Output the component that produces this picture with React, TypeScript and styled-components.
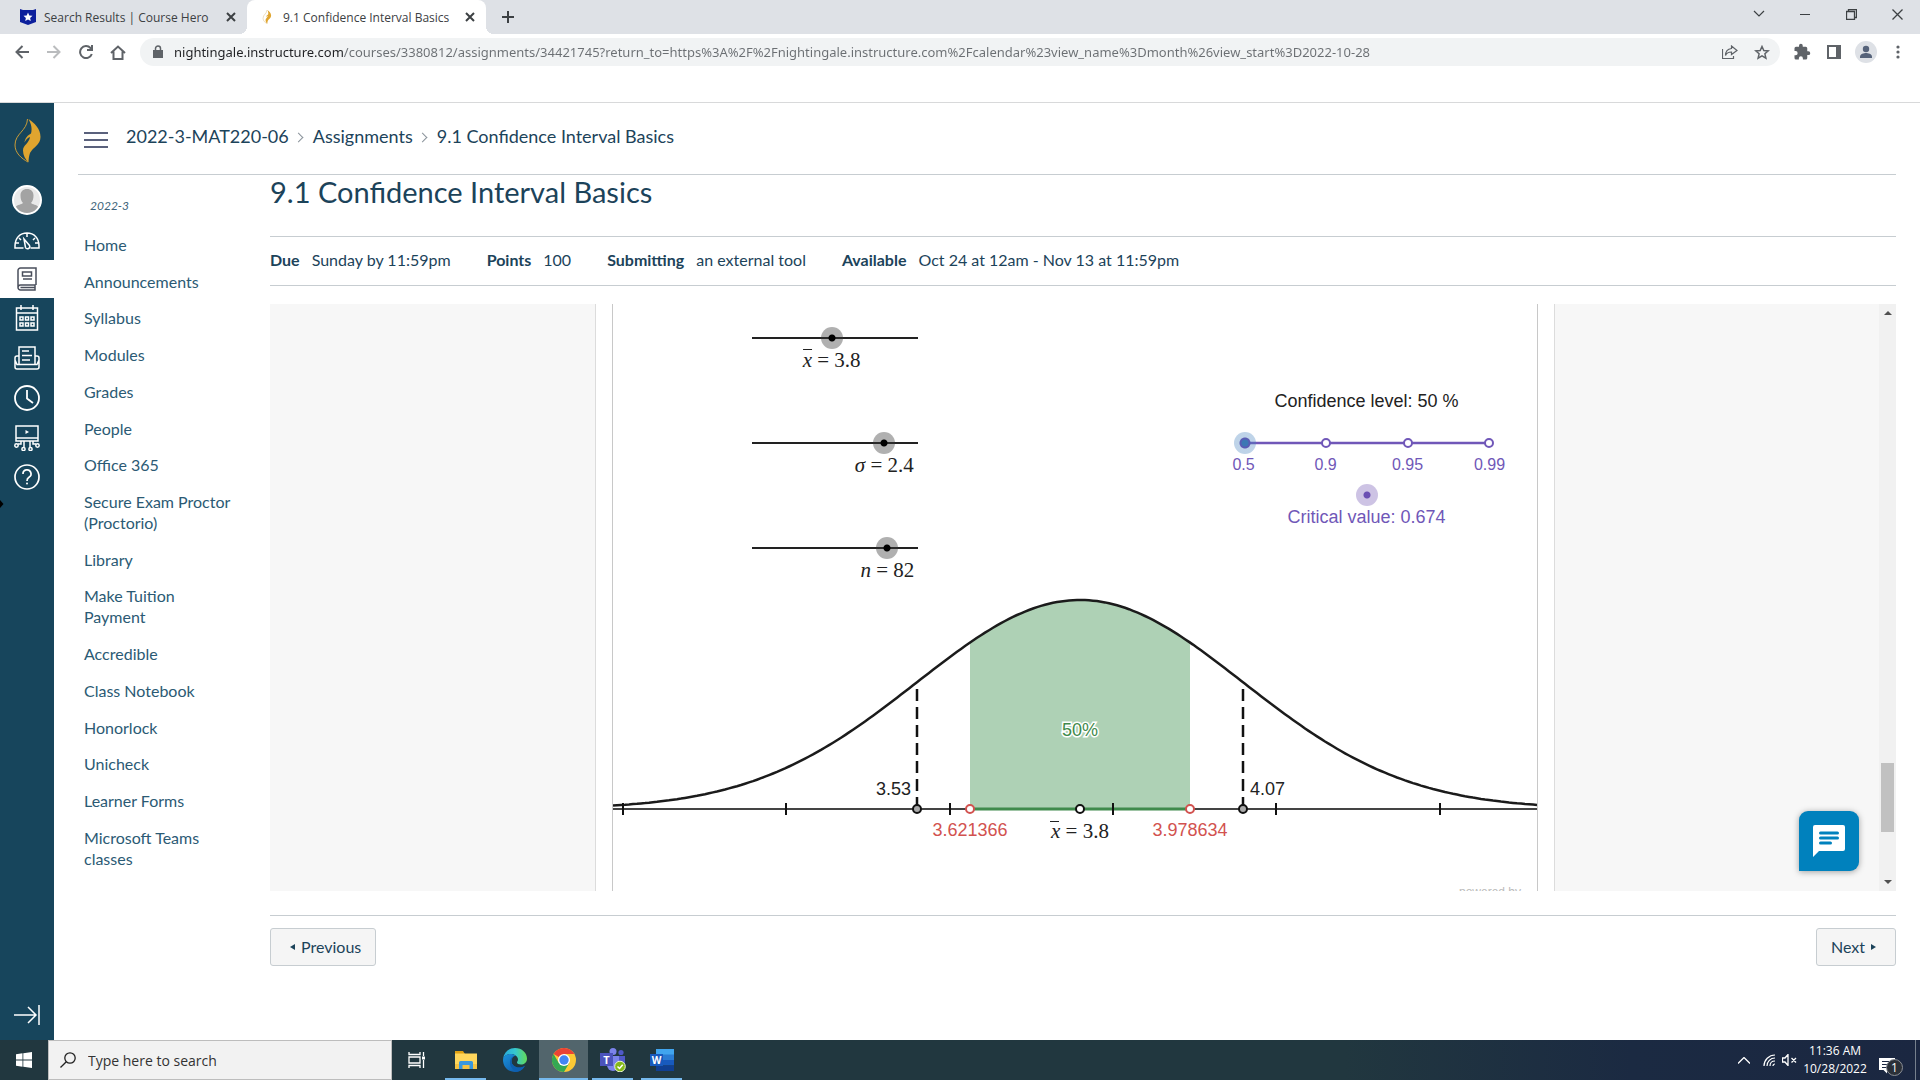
import React, { useState } from 'react';
import styled, { createGlobalStyle, css } from 'styled-components';

const UI_FONT = '"Open Sans", "Noto Sans", sans-serif';
const LATO = 'Lato, "Open Sans", sans-serif';
const MATH_FONT = '"Liberation Serif", serif';
const GRAPH_FONT = '"Liberation Sans", Arial, sans-serif';

const NAVY = '#17455c';
const INK = '#1c435a';
const RULE = '#c7cdd1';
const PURPLE = '#7057b8';

const GlobalStyle = createGlobalStyle`
  *, *::before, *::after { box-sizing: border-box; }
  body { margin: 0; background: #fff; font-family: ${LATO}; color: ${INK}; }
  button { font: inherit; color: inherit; background: none; border: 0; padding: 0; cursor: pointer; }
  a { color: inherit; text-decoration: none; }
  h1, ul, ol, dl, dd, p { margin: 0; padding: 0; }
  ul, ol { list-style: none; }
  svg { display: block; flex: none; }
`;

const Screen = styled.div`
  display: flex;
  flex-direction: column;
  min-height: 100vh;
`;

/* ---------- Browser chrome ---------- */

const TabStrip = styled.header`
  display: flex;
  height: 34px;
  padding-left: 8px;
  background: #dee1e6;
  font-family: ${UI_FONT};
  font-size: 12px;
  color: #3c4043;
`;

const Tab = styled.div<{ $active?: boolean }>`
  position: relative;
  display: flex;
  align-items: center;
  gap: 8px;
  width: 239px;
  padding: 0 8px 0 12px;
  ${(p) =>
    p.$active &&
    css`
      background: #fff;
      border-radius: 8px 8px 0 0;
      &::before,
      &::after {
        content: '';
        position: absolute;
        bottom: 0;
        width: 8px;
        height: 8px;
      }
      &::before {
        left: -8px;
        background: radial-gradient(circle at 0 0, transparent 8px, #fff 8px);
      }
      &::after {
        right: -8px;
        background: radial-gradient(circle at 100% 0, transparent 8px, #fff 8px);
      }
    `}
`;

const TabTitle = styled.span`
  flex: 1;
  white-space: nowrap;
`;

const TabButton = styled.button`
  display: grid;
  place-items: center;
  width: 16px;
  height: 16px;
`;

const NewTab = styled.button`
  display: grid;
  place-items: center;
  width: 44px;
`;

const WindowButtons = styled.div`
  display: flex;
  height: 28px;
  margin-left: auto;
`;

const WindowButton = styled.button`
  display: grid;
  place-items: center;
  width: 46px;
`;

const Toolbar = styled.div`
  display: flex;
  align-items: center;
  height: 36px;
  padding: 0 6px;
  color: #5f6368;
`;

const ToolButton = styled.button<{ $dim?: boolean }>`
  display: grid;
  place-items: center;
  width: 32px;
  height: 28px;
  color: ${(p) => (p.$dim ? '#babcbe' : '#5f6368')};
`;

const AddressBar = styled.div`
  display: flex;
  align-items: center;
  flex: 1;
  height: 28px;
  margin: 0 6px;
  padding: 0 2px 0 12px;
  border-radius: 14px;
  background: #f1f3f4;
`;

const Address = styled.input`
  flex: 1;
  min-width: 0;
  margin-left: 10px;
  padding: 0;
  border: 0;
  outline: 0;
  font-family: "Noto Sans", sans-serif;
  font-size: 13px;
  line-height: 20px;
  color: #5f6368;
  background: linear-gradient(90deg, #202124 170px, #6b6f73 170px);
  background-clip: text;
  -webkit-background-clip: text;
  -webkit-text-fill-color: transparent;
`;

const Bookmarks = styled.div`
  height: 33px;
  border-bottom: 1px solid #d8d9da;
`;

/* ---------- Course page ---------- */

const Workspace = styled.div`
  display: flex;
  flex: 1;
`;

const GlobalNav = styled.nav`
  position: relative;
  display: flex;
  flex-direction: column;
  width: 54px;
  background: ${NAVY};
  color: #fff;
`;

const NavLink = styled.a<{ $h: number; $active?: boolean }>`
  display: grid;
  place-items: center;
  height: ${(p) => p.$h}px;
  background: ${(p) => (p.$active ? '#fff' : 'transparent')};
  color: ${(p) => (p.$active ? '#4a4f5c' : '#fff')};
`;

const ExpandButton = styled.button`
  display: grid;
  place-items: center;
  height: 50px;
  margin-top: auto;
`;

const EdgeMark = styled.svg`
  position: absolute;
  left: 0;
  top: 397px;
`;

const Page = styled.div`
  flex: 1;
  min-width: 0;
  padding: 0 24px;
`;

const CrumbBar = styled.div`
  display: flex;
  align-items: center;
  height: 72px;
  padding: 0 6px;
  border-bottom: 1px solid ${RULE};
`;

const MenuButton = styled.button`
  display: grid;
  place-items: center;
  width: 24px;
  height: 24px;
  margin: 2px 18px 0 0;
  color: #5a617c;
`;

const Crumbs = styled.ol`
  display: flex;
  align-items: center;
  font-size: 18px;
  line-height: 24px;
`;

const Crumb = styled.li`
  display: flex;
  align-items: center;
  padding-bottom: 6px;
  & + &::before {
    content: '';
    width: 7px;
    height: 7px;
    margin: 4px 11px 0 6px;
    border: solid #8a939b;
    border-width: 1px 1px 0 0;
    transform: rotate(45deg);
  }
`;

const Columns = styled.div`
  display: flex;
`;

const CourseNav = styled.nav`
  width: 192px;
  padding: 22px 36px 0 6px;
`;

const Term = styled.p`
  padding-left: 6px;
  font-size: 12px;
  font-style: italic;
  line-height: 18px;
  color: #40647a;
`;

const CourseList = styled.ul`
  display: flex;
  flex-direction: column;
  justify-content: space-between;
  height: 635px;
  margin: 19px 0 0;
  font-size: 16px;
  line-height: 21px;
  color: #2b5a74;
`;

const Assignment = styled.main`
  flex: 1;
  min-width: 0;
`;

const Title = styled.h1`
  padding-bottom: 28px;
  font-size: 29px;
  font-weight: 400;
  line-height: 33px;
`;

const Details = styled.dl`
  display: flex;
  gap: 36px;
  padding: 12px 0 15px;
  border: solid ${RULE};
  border-width: 1px 0;
  font-size: 16px;
  line-height: 21px;
`;

const Detail = styled.div`
  display: flex;
  gap: 12px;
  dt {
    font-weight: 700;
  }
`;

const Frame = styled.section`
  position: relative;
  display: flex;
  margin-top: 18px;
  background: #f7f7f7;
`;

const Sheet = styled.div`
  width: 960px;
  margin: 0 auto;
  padding: 0 16px;
  border: solid #dcdcdc;
  border-width: 0 1px;
  background: #fff;
`;

const Applet = styled.div`
  border: solid #c8c8c8;
  border-width: 0 1px;
  overflow: hidden;
`;

const Controls = styled.div`
  display: flex;
  justify-content: space-between;
  height: 280px;
  padding: 23px 6px 0 128px;
`;

const SliderColumn = styled.div`
  display: grid;
  grid-auto-rows: 105px;
`;

const Field = styled.div`
  width: 188px;
`;

const thumb = css`
  width: 22px;
  height: 22px;
  border: 0;
  border-radius: 50%;
  background: radial-gradient(circle, #000 3px, transparent 4px),
    linear-gradient(transparent 10px, #2b2b2b 10px, #2b2b2b 12px, transparent 12px), #b0b0b0;
`;

const Slider = styled.input`
  display: block;
  width: 188px;
  height: 22px;
  margin: 0;
  appearance: none;
  background: linear-gradient(#222, #222) center / 166px 2px no-repeat;
  &::-webkit-slider-thumb {
    appearance: none;
    ${thumb}
  }
  &::-moz-range-thumb {
    ${thumb}
  }
`;

const SliderLabel = styled.label`
  display: block;
  width: max-content;
  transform: translateX(-50%);
  font-family: ${MATH_FONT};
  font-size: 21px;
  line-height: 22px;
  color: #222;
  white-space: pre;
`;

const Bar = styled.i`
  display: inline-block;
  border-top: 1px solid #222;
  line-height: 20px;
`;

const Confidence = styled.div`
  display: flex;
  flex-direction: column;
  align-items: center;
  width: 328px;
  padding-top: 62px;
  font-family: ${GRAPH_FONT};
  font-size: 18px;
  line-height: 24px;
  color: ${PURPLE};
`;

const ConfidenceLabel = styled.label`
  color: #222;
`;

const StepTrack = styled.div`
  display: grid;
  width: 266px;
  height: 22px;
  margin-top: 19px;
  & > * {
    grid-area: 1 / 1;
  }
`;

const StepInput = styled.input`
  width: 266px;
  height: 22px;
  margin: 0;
  appearance: none;
  background: none;
  &::-webkit-slider-thumb {
    appearance: none;
    width: 22px;
    height: 22px;
    border-radius: 50%;
    background: radial-gradient(circle, #3c78b4 3px, #5a5cb4 4px, #5a5cb4 5px, rgba(70, 130, 190, 0.35) 6px);
  }
`;

const StepNames = styled.div`
  display: grid;
  grid-template-columns: repeat(4, 1fr);
  width: 328px;
  margin-top: 1px;
  font-size: 16px;
  line-height: 20px;
  text-align: center;
`;

const CriticalDot = styled.span`
  width: 22px;
  height: 22px;
  margin-top: 9px;
  border-radius: 50%;
  background: radial-gradient(circle, #6b4fb3 3px, #cdc3e4 4px);
`;

const CriticalValue = styled.p`
  line-height: 22px;
`;

const ScrollBar = styled.div`
  display: flex;
  flex-direction: column;
  justify-content: space-between;
  align-items: center;
  width: 17px;
  padding: 7px 0;
  background: #f1f1f1;
`;

const ScrollArrow = styled.span<{ $up?: boolean }>`
  border: 4px solid transparent;
  border-width: ${(p) => (p.$up ? '0 4px 4px' : '4px 4px 0')};
  border-color: ${(p) => (p.$up ? 'transparent transparent #505050' : '#505050 transparent transparent')};
`;

const ScrollThumb = styled.span`
  width: 13px;
  height: 69px;
  margin: auto 0 48px;
  background: #c1c1c1;
`;

const ChatButton = styled.button`
  position: absolute;
  right: 37px;
  bottom: 20px;
  display: grid;
  place-items: center;
  width: 60px;
  height: 60px;
  border-radius: 9px 9px 9px 0;
  background: #0081bd;
  box-shadow: 0 1px 6px rgba(0, 0, 0, 0.35);
`;

const Pager = styled.div`
  display: flex;
  justify-content: space-between;
  margin-top: 24px;
  padding-top: 12px;
  border-top: 1px solid ${RULE};
`;

const PagerLink = styled.a`
  display: flex;
  align-items: center;
  gap: 6px;
  height: 38px;
  padding: 0 14px 2px;
  border: 1px solid ${RULE};
  border-radius: 3px;
  background: #f5f5f5;
  font-size: 16px;
`;

/* ---------- Taskbar ---------- */

const Taskbar = styled.footer`
  display: flex;
  height: 40px;
  background: linear-gradient(90deg, #21373f 0%, #21373f 70%, #1b2a42 85%, #1b2741 100%);
  color: #fff;
  font-family: ${UI_FONT};
`;

const StartButton = styled.button`
  display: grid;
  place-items: center;
  width: 48px;
`;

const TaskButton = styled.button<{ $open?: boolean; $active?: boolean }>`
  display: grid;
  place-items: center;
  width: 49px;
  background: ${(p) => (p.$active ? '#52656c' : 'transparent')};
  ${(p) =>
    p.$open &&
    css`
      position: relative;
      &::after {
        content: '';
        position: absolute;
        bottom: 0;
        left: ${p.$active ? 0 : 4}px;
        right: ${p.$active ? 0 : 4}px;
        height: 2px;
        background: #76b9ed;
      }
    `}
`;

const SearchBox = styled.label`
  display: flex;
  align-items: center;
  gap: 12px;
  width: 344px;
  padding: 0 11px;
  border: 1px solid #bdbdbd;
  background: #f2f2f2;
  color: #222;
`;

const SearchInput = styled.input`
  flex: 1;
  min-width: 0;
  padding: 0;
  border: 0;
  outline: 0;
  background: none;
  font-family: ${UI_FONT};
  font-size: 14px;
  &::placeholder {
    color: #333;
    opacity: 1;
  }
`;

const Tray = styled.div`
  display: flex;
  align-items: center;
  margin-left: auto;
  padding-right: 4px;
`;

const TrayButton = styled.button<{ $w: number }>`
  display: grid;
  place-items: center;
  width: ${(p) => p.$w}px;
  height: 40px;
`;

const Clock = styled.time`
  width: 72px;
  font-size: 12px;
  line-height: 18px;
  text-align: center;
`;

const Notice = styled.button`
  position: relative;
  width: 45px;
  height: 40px;
  padding: 12px 0 0 8px;
  border-right: 1px solid #76808d;
`;

const NoticeCount = styled.span`
  position: absolute;
  left: 15px;
  top: 19px;
  width: 17px;
  height: 17px;
  border: 1px solid #8b8f96;
  border-radius: 50%;
  background: #2b3038;
  font-size: 12px;
  line-height: 15px;
  text-align: center;
`;

/* ---------- Icons ---------- */

const Line = ({ w, h, d, sw = 2 }: { w: number; h: number; d: string; sw?: number }) => (
  <svg width={w} height={h} viewBox={`0 0 ${w} ${h}`} fill="none" stroke="currentColor" strokeWidth={sw} aria-hidden="true">
    <path d={d} />
  </svg>
);

const Flame = ({ w, h }: { w: number; h: number }) => (
  <svg width={w} height={h} viewBox="0 0 27 44" aria-hidden="true">
    <path fill="#e0a52f" d="M14.500 0C20 4 26.500 9 26.500 18c0 8-7.500 10-10.500 16-1 3-1.500 6-1.500 9.500-3-3-5.500-7-5.500-12 0-5.500 6-7 7-13.500-2.500 1-4 2.500-5.500 5.500C11 19 14 16 17 14.500c1.500-5 0-10-2.500-14.500z" />
    <path fill="none" stroke="#c99c38" d="M13.500 0C13 12 1 14.500 1 26c0 8 6.500 13.500 13 17" />
  </svg>
);

const CourseHeroIcon = () => (
  <svg width="16" height="16" viewBox="0 0 16 16" aria-hidden="true">
    <path fill="#0c1f9c" d="M0 0l3 1h10l3-1v13l-8 3-8-3z" />
    <path fill="#fff" d="M8 3.500l1.300 3 3.200.300-2.400 2.100.700 3.200L8 10.400l-2.800 1.700.700-3.200-2.400-2.100 3.200-.300z" />
  </svg>
);

const AvatarIcon = () => (
  <svg width="30" height="30" viewBox="0 0 30 30" aria-hidden="true">
    <circle cx="15" cy="15" r="14" fill="#e9e9e9" />
    <path fill="#a3a3a3" d="M3.500 22c2-2.500 6-2.500 7.500-4-1.800-2-2.500-4.500-2.500-7.500C8.500 6.500 11 4 15 4s6.500 2.500 6.500 6.500c0 3-.700 5.500-2.500 7.500 1.500 1.500 5.500 1.500 7.500 4-2.500 4-6.500 6.500-11.500 6.500S6 26 3.500 22z" />
    <circle cx="15" cy="15" r="14" fill="none" stroke="#fff" strokeWidth="2" />
  </svg>
);

const DashboardIcon = () => (
  <svg width="26" height="18" viewBox="0 0 26 18" fill="none" stroke="currentColor" strokeWidth="1.500" aria-hidden="true">
    <path d="M9.500 16H1v-2C1 6 6 1 13 1s12 5 12 13v2h-8.500M13 1v4M5 6l2 2M21 6l-2 2M2 11h3M24 11h-3" />
    <path d="M10 7l5.500 6.500a2.200 2.200 0 0 1-4 2z" />
  </svg>
);

const BookIcon = () => (
  <svg width="20" height="24" viewBox="0 0 20 24" fill="none" stroke="currentColor" strokeWidth="1.500" aria-hidden="true">
    <path d="M19 18V1H3.500A2.500 2.500 0 0 0 1 3.500v17A2.500 2.500 0 0 0 3.500 23H18v-5H3.500A2.500 2.500 0 0 0 1 20.500M3.500 20.500h14.500" />
    <path d="M5.500 5h9v4h-9zM6 12h9" />
  </svg>
);

const CalendarIcon = () => (
  <svg width="24" height="26" viewBox="0 0 24 26" fill="none" stroke="currentColor" strokeWidth="1.500" aria-hidden="true">
    <path d="M1.500 3h21v22h-21zM1.500 8h21M6 0v5M18 0v5" />
    <path d="M5 12h3v3H5zM10.500 12h3v3h-3zM16 12h3v3h-3zM5 18h3v3H5zM10.500 18h3v3h-3zM16 18h3v3h-3z" />
  </svg>
);

const InboxIcon = () => (
  <svg width="26" height="24" viewBox="0 0 26 24" fill="none" stroke="currentColor" strokeWidth="1.500" aria-hidden="true">
    <path d="M5 18V1h16v17M8 5h7M8 9.500h10M8 14h8" />
    <path d="M5 10H3a2 2 0 0 0-2 2v9a2 2 0 0 0 2 2h20a2 2 0 0 0 2-2v-9a2 2 0 0 0-2-2h-2M1 14l2 4.500h20l2-4.500" />
  </svg>
);

const HistoryIcon = () => (
  <svg width="26" height="26" viewBox="0 0 26 26" fill="none" stroke="currentColor" strokeWidth="1.800" aria-hidden="true">
    <circle cx="13" cy="13" r="12" />
    <path d="M13 5v8.500l6 4.500" />
  </svg>
);

const StudioIcon = () => (
  <svg width="26" height="26" viewBox="0 0 26 26" fill="none" stroke="currentColor" strokeWidth="1.500" aria-hidden="true">
    <path d="M2 1h22v15H2zM2 13h22M10 16v6M16 16v6M7 16v3H4M19 16v3h3" />
    <path fill="currentColor" stroke="none" d="M11.500 5l3.500 2-3.500 2z" />
    <circle cx="2.500" cy="20.500" r="1.700" />
    <circle cx="9.500" cy="24" r="1.600" />
    <circle cx="16.500" cy="24" r="1.600" />
    <circle cx="23.500" cy="20.500" r="1.700" />
  </svg>
);

const HelpIcon = () => (
  <svg width="26" height="26" viewBox="0 0 26 26" fill="none" stroke="currentColor" strokeWidth="1.700" aria-hidden="true">
    <circle cx="13" cy="13" r="12" />
    <path d="M9 10a4 4 0 1 1 6 3.300c-1.500.900-2 1.500-2 3.700" />
    <circle cx="13" cy="19.500" r="1" fill="currentColor" stroke="none" />
  </svg>
);

const PuzzleIcon = () => (
  <svg width="18" height="18" viewBox="0 0 24 24" fill="currentColor" aria-hidden="true">
    <path d="M20.500 11H19V7a2 2 0 0 0-2-2h-4V3.500a2.500 2.500 0 0 0-5 0V5H4a2 2 0 0 0-2 2v3.800h1.500a2.700 2.700 0 0 1 0 5.400H2V20a2 2 0 0 0 2 2h3.800v-1.500a2.700 2.700 0 0 1 5.400 0V22H17a2 2 0 0 0 2-2v-4h1.500a2.500 2.500 0 0 0 0-5z" />
  </svg>
);

const ProfileIcon = () => (
  <svg width="22" height="22" viewBox="0 0 22 22" aria-hidden="true">
    <circle cx="11" cy="11" r="11" fill="#dee1e6" />
    <circle cx="11" cy="8" r="3.200" fill="#56637a" />
    <path fill="#56637a" d="M5 17v-1.500c0-2.500 4-3.500 6-3.500s6 1 6 3.500V17z" />
  </svg>
);

const FolderIcon = () => (
  <svg width="22" height="18" viewBox="0 0 22 18" aria-hidden="true">
    <path fill="#e0a012" d="M0 0h8l2 3H0z" />
    <path fill="#ffd65c" d="M0 2.500h22V18H0z" />
    <path fill="#f5c242" d="M0 13h22v5H0z" />
    <path fill="#3a97dd" d="M4 18v-6.500A1.500 1.500 0 0 1 5.500 10h11a1.500 1.500 0 0 1 1.500 1.500V18h-3.500v-4h-7v4z" />
  </svg>
);

const EdgeIcon = () => (
  <svg width="24" height="24" viewBox="0 0 24 24" aria-hidden="true">
    <defs>
      <linearGradient id="edgeTop" x1="0" x2="1">
        <stop offset="0" stopColor="#28a9dc" />
        <stop offset=".5" stopColor="#35c6cf" />
        <stop offset="1" stopColor="#63da58" />
      </linearGradient>
      <linearGradient id="edgeLow" x1="0" x2="1" y2="1">
        <stop offset="0" stopColor="#1b93dc" />
        <stop offset="1" stopColor="#0c4fa0" />
      </linearGradient>
    </defs>
    <path fill="url(#edgeTop)" d="M0 11C1 4 6 0 12 0c7 0 12 5 12 10.500 0 4-3 6-6 6-2.500 0-4-1-4-2s1-1.300 1-3C15 8 11 6 7.500 6 4 6 1 8 0 11z" />
    <path fill="url(#edgeLow)" d="M0 12c0-4 4-6 7.500-6 2 0 4 .700 5.200 1.700C10 8 8.500 10.500 8.500 13c0 4 3.500 6.500 7.500 6.500 2.500 0 4.500-.800 6-1.800C20 21.500 16.500 24 12 24 5.500 24 0 19 0 12z" />
    <path fill="#0d5fb0" d="M12.700 7.700C9 8 7 11 7 14.500c0 4.500 3 8 7.500 9.200C18 23 20.500 20.500 22 17.700c-1.500 1-3.500 1.800-6 1.800-4 0-7.500-2.500-7.500-6.500 0-2.500 1.500-5 4.200-5.300z" />
  </svg>
);

const ChromeIcon = () => (
  <svg width="24" height="24" viewBox="0 0 24 24" aria-hidden="true">
    <circle cx="12" cy="12" r="12" fill="#fcc934" />
    <path fill="#ea4335" d="M12 12L1.600 6A12 12 0 0 1 22.400 6H12z" />
    <path fill="#34a853" d="M1.600 6A12 12 0 0 0 12 24l5.200-9L12 12 6.800 15z" />
    <circle cx="12" cy="12" r="6" fill="#fff" />
    <circle cx="12" cy="12" r="4.700" fill="#4285f4" />
  </svg>
);

const TeamsIcon = () => (
  <svg width="26" height="24" viewBox="0 0 26 24" aria-hidden="true">
    <circle cx="13" cy="3.500" r="3.500" fill="#7b83eb" />
    <circle cx="21" cy="4.500" r="2.600" fill="#5059c9" />
    <path fill="#5059c9" d="M17 8h8v7a4.500 4.500 0 0 1-8 3z" />
    <path fill="#7b83eb" d="M7 8h12v9a6 6 0 0 1-12 0z" />
    <path fill="#4b53bc" d="M0 5h13v13H0z" />
    <text x="6.500" y="15.500" textAnchor="middle" fontFamily="Open Sans" fontWeight="700" fontSize="11" fill="#fff">T</text>
    <circle cx="20" cy="18.500" r="5.300" fill="#84b818" stroke="#e8f2d0" strokeWidth="1" />
    <path d="M17.500 18.500l2 2 3.200-3.700" fill="none" stroke="#fff" strokeWidth="1.500" />
  </svg>
);

const WordIcon = () => (
  <svg width="24" height="22" viewBox="0 0 24 22" aria-hidden="true">
    <path fill="#41a5ee" d="M6 0h18v6H6z" />
    <path fill="#2b7cd3" d="M6 5.500h18V11H6z" />
    <path fill="#185abd" d="M6 11h18v5.500H6z" />
    <path fill="#103f91" d="M6 16.500h18V22H6z" />
    <path fill="#185abd" d="M0 5h13v12H0z" />
    <text x="6.500" y="15" textAnchor="middle" fontFamily="Open Sans" fontWeight="700" fontSize="10" fill="#fff">W</text>
  </svg>
);

/* ---------- Applet ---------- */

const CENTER = 467;
const SD = 163;
const BASE = 225;
const PEAK = 209;

const curveY = (x: number) => BASE - PEAK * Math.exp(-0.5 * ((x - CENTER) / SD) ** 2);

const curve = (from: number, to: number) => {
  const points: string[] = [];
  for (let x = from; x <= to; x += 4) points.push(`${x},${curveY(x).toFixed(1)}`);
  points.push(`${to},${curveY(to).toFixed(1)}`);
  return 'M' + points.join('L');
};

const LOW = 357;
const HIGH = 577;

const BellChart = () => (
  <svg width="100%" height="307" viewBox="0 0 924 307" preserveAspectRatio="xMidYMin" role="img" aria-label="Sampling distribution with the middle 50% shaded">
    <path d={`${curve(LOW, HIGH)}V${BASE}H${LOW}Z`} fill="#aed1b5" />
    <path d={`M0 ${BASE}H924`} stroke="#444" strokeWidth="2" />
    <path d={`M${LOW} ${BASE}H${HIGH}`} stroke="#3f8a4c" strokeWidth="3" />
    <path d={curve(0, 924)} fill="none" stroke="#1b1b1b" strokeWidth="2.500" />
    {[10, 173, 337, 500, 663, 827].map((x) => (
      <path key={x} d={`M${x} 219v12`} stroke="#111" strokeWidth="2" />
    ))}
    {[CENTER - SD, CENTER + SD].map((x) => (
      <path key={x} d={`M${x} ${BASE}V100`} stroke="#111" strokeWidth="2.500" strokeDasharray="12 6" />
    ))}
    {[CENTER - SD, CENTER, CENTER + SD].map((x) => (
      <circle key={x} cx={x} cy={BASE} r="4" fill={x === CENTER ? '#fff' : '#aaa'} stroke="#111" strokeWidth="2" />
    ))}
    {[LOW, HIGH].map((x) => (
      <circle key={x} cx={x} cy={BASE} r="4" fill="#fff" stroke="#d2524f" strokeWidth="2" />
    ))}
    <g fontFamily="Liberation Sans, Arial, sans-serif" fontSize="18">
      <text x="298" y="211" textAnchor="end" fill="#222">3.53</text>
      <text x="637" y="211" fill="#222">4.07</text>
      <text x={LOW} y="252" textAnchor="middle" fill="#d2524f">3.621366</text>
      <text x={HIGH} y="252" textAnchor="middle" fill="#d2524f">3.978634</text>
      <text x={CENTER} y="152" textAnchor="middle" fill="#3f8a4c" stroke="#fff" strokeWidth="3" paintOrder="stroke">50%</text>
      <text x="846" y="312" fontSize="12" fill="#bbb">powered by</text>
    </g>
    <path d="M437 237.500h9" stroke="#222" />
    <text x={CENTER} y="254" textAnchor="middle" fontFamily="Liberation Serif, serif" fontSize="21" fill="#222">
      <tspan fontStyle="italic">x</tspan> = 3.8
    </text>
  </svg>
);

interface ParamProps {
  id: string;
  symbol: React.ReactNode;
  min: number;
  max: number;
  step: number;
  initial: number;
}

const Param = ({ id, symbol, min, max, step, initial }: ParamProps) => {
  const [value, setValue] = useState(initial);
  const knob = 11 + (166 * (value - min)) / (max - min);
  return (
    <Field>
      <Slider id={id} type="range" min={min} max={max} step={step} value={value} onChange={(e) => setValue(Number(e.target.value))} />
      <SliderLabel htmlFor={id} style={{ marginLeft: knob }}>
        {symbol} = {value}
      </SliderLabel>
    </Field>
  );
};

const LEVELS = ['0.5', '0.9', '0.95', '0.99'];

const courseLinks = [
  'Home', 'Announcements', 'Syllabus', 'Modules', 'Grades', 'People', 'Office 365', 'Secure Exam Proctor (Proctorio)',
  'Library', 'Make Tuition Payment', 'Accredible', 'Class Notebook', 'Honorlock', 'Unicheck', 'Learner Forms', 'Microsoft Teams classes',
];

const details = [
  ['Due', 'Sunday by 11:59pm'],
  ['Points', '100'],
  ['Submitting', 'an external tool'],
  ['Available', 'Oct 24 at 12am - Nov 13 at 11:59pm'],
];

const globalLinks = [
  { name: 'Home page', h: 75, icon: <Flame w={27} h={44} /> },
  { name: 'Account', h: 44, icon: <AvatarIcon /> },
  { name: 'Dashboard', h: 38, icon: <DashboardIcon /> },
  { name: 'Courses', h: 38, icon: <BookIcon />, active: true },
  { name: 'Calendar', h: 40, icon: <CalendarIcon /> },
  { name: 'Inbox', h: 40, icon: <InboxIcon /> },
  { name: 'History', h: 40, icon: <HistoryIcon /> },
  { name: 'Studio', h: 40, icon: <StudioIcon /> },
  { name: 'Help', h: 38, icon: <HelpIcon /> },
];

const URL_TEXT =
  'nightingale.instructure.com/courses/3380812/assignments/34421745?return_to=https%3A%2F%2Fnightingale.instructure.com%2Fcalendar%23view_name%3Dmonth%26view_start%3D2022-10-28';

const CLOSE = 'M1 1l8 8M9 1l-8 8';

export default function App() {
  return (
    <Screen>
      <GlobalStyle />
      <TabStrip>
        <Tab>
          <CourseHeroIcon />
          <TabTitle>Search Results | Course Hero</TabTitle>
          <TabButton aria-label="Close tab"><Line w={10} h={10} d={CLOSE} /></TabButton>
        </Tab>
        <Tab $active>
          <Flame w={16} h={14} />
          <TabTitle>9.1 Confidence Interval Basics</TabTitle>
          <TabButton aria-label="Close tab"><Line w={10} h={10} d={CLOSE} /></TabButton>
        </Tab>
        <NewTab aria-label="New tab"><Line w={12} h={12} d="M6 0v12M0 6h12" /></NewTab>
        <WindowButtons>
          <WindowButton aria-label="Search tabs"><Line w={12} h={8} sw={1.2} d="M1 1l5 5 5-5" /></WindowButton>
          <WindowButton aria-label="Minimize"><Line w={10} h={1} sw={2} d="M0 .500h10" /></WindowButton>
          <WindowButton aria-label="Restore"><Line w={11} h={11} sw={1.3} d="M.500 2.500h8v8h-8zM2.500 2.500v-2h8v8h-2" /></WindowButton>
          <WindowButton aria-label="Close"><Line w={11} h={11} sw={1.3} d="M.500.500l10 10M10.500.500l-10 10" /></WindowButton>
        </WindowButtons>
      </TabStrip>
      <Toolbar>
        <ToolButton aria-label="Back"><Line w={14} h={14} d="M14 7H2M7.500 1L1.500 7l6 6" /></ToolButton>
        <ToolButton aria-label="Forward" $dim><Line w={14} h={14} d="M0 7h12M6.500 1l6 6-6 6" /></ToolButton>
        <ToolButton aria-label="Reload"><Line w={14} h={14} d="M12.800 9A6 6 0 1 1 11.500 3L13 4.500M13 0v5H8" /></ToolButton>
        <ToolButton aria-label="Home"><Line w={16} h={15} d="M1 8l7-6.500L15 8M3.500 6.500V14h9V6.500" /></ToolButton>
        <AddressBar>
          <svg width="12" height="14" viewBox="0 0 12 14" aria-hidden="true">
            <path fill="#5f6368" d="M1 5h10v8H1z" />
            <path fill="none" stroke="#5f6368" strokeWidth="1.500" d="M3.500 5V3.500a2.500 2.500 0 0 1 5 0V5" />
          </svg>
          <Address aria-label="Address" defaultValue={URL_TEXT} spellCheck={false} />
          <ToolButton aria-label="Share"><Line w={16} h={14} sw={1.2} d="M.500 4v9.500h11V11M9.500 1l5.500 4.500-5.500 4V7C6.500 7 4.500 8 3.500 10.500 3.500 6.500 6 4 9.500 3.500z" /></ToolButton>
          <ToolButton aria-label="Bookmark"><Line w={16} h={15} sw={1.5} d="M8 1.500l1.800 4 4.400.400-3.300 2.900 1 4.300L8 10.800l-3.900 2.300 1-4.300L1.800 5.900l4.400-.400z" /></ToolButton>
        </AddressBar>
        <ToolButton aria-label="Extensions"><PuzzleIcon /></ToolButton>
        <ToolButton aria-label="Side panel">
          <svg width="14" height="14" viewBox="0 0 14 14" aria-hidden="true"><path fill="#5f6368" fillRule="evenodd" d="M0 0h14v14H0zM2 2v10h7V2z" /></svg>
        </ToolButton>
        <ToolButton aria-label="Profile"><ProfileIcon /></ToolButton>
        <ToolButton aria-label="Menu">
          <svg width="4" height="14" viewBox="0 0 4 14" fill="#5f6368" aria-hidden="true"><circle cx="2" cy="2" r="1.600" /><circle cx="2" cy="7" r="1.600" /><circle cx="2" cy="12" r="1.600" /></svg>
        </ToolButton>
      </Toolbar>
      <Bookmarks />

      <Workspace>
        <GlobalNav aria-label="Global">
          {globalLinks.map((l) => (
            <NavLink key={l.name} href="#" aria-label={l.name} $h={l.h} $active={l.active}>{l.icon}</NavLink>
          ))}
          <EdgeMark width="4" height="8" viewBox="0 0 4 8" aria-hidden="true"><path d="M0 0l3.500 4L0 8z" /></EdgeMark>
          <ExpandButton aria-label="Expand navigation"><Line w={26} h={20} sw={1.5} d="M0 10h21M14 2l8 8-8 8M25 0v20" /></ExpandButton>
        </GlobalNav>

        <Page>
          <CrumbBar>
            <MenuButton aria-label="Course navigation"><Line w={24} h={18} sw={2} d="M0 2h24M0 9h24M0 16h24" /></MenuButton>
            <Crumbs>
              <Crumb><a href="#">2022-3-MAT220-06</a></Crumb>
              <Crumb><a href="#">Assignments</a></Crumb>
              <Crumb>9.1 Confidence Interval Basics</Crumb>
            </Crumbs>
          </CrumbBar>
          <Columns>
            <CourseNav aria-label="Course">
              <Term>2022-3</Term>
              <CourseList>
                {courseLinks.map((l) => (
                  <li key={l}><a href="#">{l}</a></li>
                ))}
              </CourseList>
            </CourseNav>
            <Assignment>
              <Title>9.1 Confidence Interval Basics</Title>
              <Details>
                {details.map(([k, v]) => (
                  <Detail key={k}><dt>{k}</dt><dd>{v}</dd></Detail>
                ))}
              </Details>
              <Frame>
                <Sheet>
                  <Applet>
                    <Controls>
                      <SliderColumn>
                        <Param id="mean" symbol={<Bar>x</Bar>} min={1} max={6.8} step={0.1} initial={3.8} />
                        <Param id="sigma" symbol={<i>σ</i>} min={0} max={3} step={0.1} initial={2.4} />
                        <Param id="size" symbol={<i>n</i>} min={1} max={100} step={1} initial={82} />
                      </SliderColumn>
                      <Confidence>
                        <ConfidenceLabel htmlFor="level">Confidence level: 50 %</ConfidenceLabel>
                        <StepTrack>
                          <svg width="266" height="22" viewBox="0 0 266 22" aria-hidden="true">
                            <path d="M11 11h244" stroke={PURPLE} strokeWidth="2.500" />
                            {[92, 174, 255].map((x) => (
                              <circle key={x} cx={x} cy="11" r="4" fill="#fff" stroke={PURPLE} strokeWidth="2" />
                            ))}
                          </svg>
                          <StepInput id="level" type="range" min={0} max={3} step={1} defaultValue={0} />
                        </StepTrack>
                        <StepNames>{LEVELS.map((l) => <span key={l}>{l}</span>)}</StepNames>
                        <CriticalDot />
                        <CriticalValue>Critical value: 0.674</CriticalValue>
                      </Confidence>
                    </Controls>
                    <BellChart />
                  </Applet>
                </Sheet>
                <ScrollBar>
                  <ScrollArrow $up />
                  <ScrollThumb />
                  <ScrollArrow />
                </ScrollBar>
                <ChatButton aria-label="Chat">
                  <svg width="32" height="32" viewBox="0 0 32 32" aria-hidden="true">
                    <path fill="#fff" d="M2 0h28a2 2 0 0 1 2 2v22a2 2 0 0 1-2 2H6l-6 6V2a2 2 0 0 1 2-2z" />
                    <path stroke="#0081bd" strokeWidth="3" strokeLinecap="round" d="M7.500 8h17M7.500 13h17M7.500 18h10" />
                  </svg>
                </ChatButton>
              </Frame>
              <Pager>
                <PagerLink href="#">
                  <svg width="10" height="10" viewBox="0 0 10 10" aria-hidden="true"><path fill={INK} d="M10 3v6L5 6z" /></svg>
                  Previous
                </PagerLink>
                <PagerLink href="#">
                  Next
                  <svg width="10" height="10" viewBox="0 0 10 10" aria-hidden="true"><path fill={INK} d="M0 3v6l5-3z" /></svg>
                </PagerLink>
              </Pager>
            </Assignment>
          </Columns>
        </Page>
      </Workspace>

      <Taskbar>
        <StartButton aria-label="Start">
          <svg width="16" height="16" viewBox="0 0 16 16" fill="#fff" aria-hidden="true"><path d="M0 2.300L6.500 1.300v6.200H0zM7.300 1.200L16 0v7.500H7.300zM0 8.500h6.500v6.200L0 13.700zM7.300 8.500H16V16l-8.700-1.200z" /></svg>
        </StartButton>
        <SearchBox>
          <svg width="16" height="16" viewBox="0 0 16 16" fill="none" stroke="#222" strokeWidth="1.300" aria-hidden="true"><circle cx="10" cy="6" r="5.200" /><path d="M6.300 9.700L.500 15.500" /></svg>
          <SearchInput aria-label="Search" placeholder="Type here to search" />
        </SearchBox>
        <TaskButton aria-label="Task view">
          <svg width="18" height="16" viewBox="0 0 18 16" fill="none" stroke="#fff" strokeWidth="1.300" aria-hidden="true"><path d="M1 0v2.500h11V0M1 16v-2.500h11V16M1 5h11v6H1zM15.500 0v4M15.500 8v8" /><path fill="#fff" stroke="none" d="M14 4.500h3v3h-3z" /></svg>
        </TaskButton>
        <TaskButton aria-label="File Explorer" $open><FolderIcon /></TaskButton>
        <TaskButton aria-label="Edge"><EdgeIcon /></TaskButton>
        <TaskButton aria-label="Chrome" $open $active><ChromeIcon /></TaskButton>
        <TaskButton aria-label="Teams" $open><TeamsIcon /></TaskButton>
        <TaskButton aria-label="Word" $open><WordIcon /></TaskButton>
        <Tray>
          <TrayButton $w={30} aria-label="Hidden icons"><Line w={12} h={7} sw={1.3} d="M0 6.500l6-6 6 6" /></TrayButton>
          <TrayButton $w={20} aria-label="Network"><Line w={12} h={12} sw={1.2} d="M1 12C1 6 6 1 12 1M4 12c0-4.500 3.500-8 8-8M7 12c0-3 2-5 5-5M10 12c0-1 1-2 2-2" /></TrayButton>
          <TrayButton $w={20} aria-label="Volume"><Line w={15} h={12} sw={1.3} d="M.500 4v4h2.500l3 3.500V.500L3 4zM9.500 4l4.500 4.500M14 4L9.500 8.500" /></TrayButton>
          <Clock>11:36 AM<br />10/28/2022</Clock>
          <Notice aria-label="Notifications">
            <svg width="16" height="16" viewBox="0 0 16 16" aria-hidden="true"><path fill="#fff" d="M0 0h16v12H8v3.500L4.500 12H0z" /><path stroke="#1b2741" d="M3 3.500h10M3 6.500h10M3 9.500h7" /></svg>
            <NoticeCount>1</NoticeCount>
          </Notice>
        </Tray>
      </Taskbar>
    </Screen>
  );
}
